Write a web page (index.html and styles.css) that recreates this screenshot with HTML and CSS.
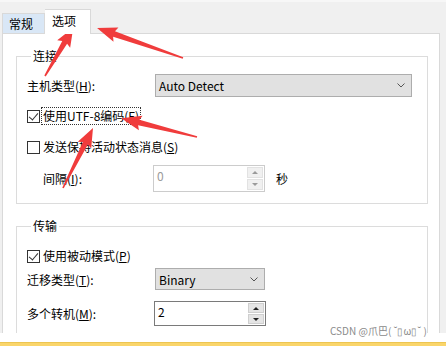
FILE: index.html
```html
<!DOCTYPE html>
<html lang="zh-CN">
<head>
    <meta charset="UTF-8">
    <title>选项</title>
    <link rel="stylesheet" href="styles.css">
</head>
<body>

    <div class="window">
        <div class="tabs">
            <div class="tab">常规</div>
            <div class="tab active">选项</div>
        </div>

        <div class="panel">
            <fieldset class="group">
                <legend>连接</legend>

                <div class="row first">
                    <span class="label">主机类型(<u>H</u>):</span>
                    <div class="select wide">
                        <span>Auto Detect</span>
                        <svg class="chev" width="8" height="5" viewBox="0 0 8 5"><polyline points="0.5,0.5 4,4 7.5,0.5" fill="none" stroke="#555" stroke-width="1"/></svg>
                    </div>
                </div>

                <div class="row check-row r-utf">
                    <span class="box checked"></span>
                    <span class="check-text focus">使用UTF-8编码(<u>F</u>)</span>
                </div>

                <div class="row check-row r-keep">
                    <span class="box"></span>
                    <span class="check-text">发送保持活动状态消息(<u>S</u>)</span>
                </div>

                <div class="row r-interval">
                    <span class="label indent">间隔(<u>I</u>):</span>
                    <div class="spin disabled">
                        <span class="spin-value">0</span>
                        <div class="spin-btns">
                            <span class="spin-btn"><i class="up"></i></span>
                            <span class="spin-btn"><i class="down"></i></span>
                        </div>
                    </div>
                    <span class="unit">秒</span>
                </div>
            </fieldset>

            <fieldset class="group second">
                <legend>传输</legend>

                <div class="row check-row r-passive">
                    <span class="box checked"></span>
                    <span class="check-text">使用被动模式(<u>P</u>)</span>
                </div>

                <div class="row r-type">
                    <span class="label">迁移类型(<u>T</u>):</span>
                    <div class="select narrow">
                        <span>Binary</span>
                        <svg class="chev" width="8" height="5" viewBox="0 0 8 5"><polyline points="0.5,0.5 4,4 7.5,0.5" fill="none" stroke="#555" stroke-width="1"/></svg>
                    </div>
                </div>

                <div class="row r-multi">
                    <span class="label">多个转机(<u>M</u>):</span>
                    <div class="spin">
                        <span class="spin-value">2</span>
                        <div class="spin-btns">
                            <span class="spin-btn"><i class="up"></i></span>
                            <span class="spin-btn"><i class="down"></i></span>
                        </div>
                    </div>
                </div>
            </fieldset>
        </div>

        <div class="side"></div>
    </div>

    <div class="gap"></div>
    <div class="notice"></div>

    <div class="watermark">CSDN @爪巴( ˘▯ω▯˘ )</div>

    <!-- red annotation arrows drawn over the dialog -->
    <svg class="arrows" width="446" height="346" viewBox="0 0 446 346">
        <g fill="#f03c3c">
            <polygon transform="translate(45,76) rotate(-59.7)" points="0,-0.8 39,-2.8 37,-7.5 56,0 37,7.5 39,2.8 0,0.8"/>
            <polygon transform="translate(183,58) rotate(-160.8)" points="0,-0.8 73,-2.8 71,-7.5 91,0 71,7.5 73,2.8 0,0.8"/>
            <polygon transform="translate(197,137) rotate(-166)" points="0,-0.8 60,-2.8 58,-7.5 78,0 58,7.5 60,2.8 0,0.8"/>
            <polygon transform="translate(63,188) rotate(-63.4)" points="0,-0.8 50,-2.8 48,-7.5 67,0 48,7.5 50,2.8 0,0.8"/>
        </g>
    </svg>

</body>
</html>
```

FILE: styles.css
```css
body {
    margin: 0;
    width: 446px;
    height: 346px;
    overflow: hidden;
    position: relative;
    background-color: #ffffff;
    font-family: "Noto Sans CJK SC", "Noto Sans", sans-serif;
    font-size: 12px;
    color: #000;
}

u {
    text-decoration: underline;
    text-underline-offset: 1px;
}

.window {
    height: 333px;
    background-color: #f0f0f0;
    border-top: 2px solid #f7f7f7;
    box-sizing: border-box;
    overflow: hidden;
    display: flex;
    flex-direction: column;
    position: relative;
}

.tabs {
    height: 31px;
    display: flex;
    align-items: flex-end;
    padding-left: 2px;
    flex-shrink: 0;
}

.tab {
    width: 43px;
    height: 20px;
    box-sizing: border-box;
    border: 1px solid #d9d9d9;
    border-bottom: none;
    background-color: #d9e7f6;
    line-height: 19px;
    padding-left: 6px;
}

.tab.active {
    width: 46px;
    height: 25px;
    margin-bottom: -1px;
    background-color: #fff;
    border-left: none;
    line-height: 22px;
    padding-left: 7px;
    position: relative;
    z-index: 1;
}

.panel {
    margin-left: 2px;
    width: 438px;
    flex: 1;
    box-sizing: border-box;
    background-color: #fff;
    border: 1px solid #d9d9d9;
    border-bottom: none;
    padding-top: 14px;
}

.side {
    position: absolute;
    right: 0;
    top: 31px;
    width: 6px;
    height: 296px;
    background-color: #f0f0f0;
}

.group {
    margin: 0 0 0 13px;
    width: 412px;
    box-sizing: border-box;
    border: 1px solid #dcdcdc;
    padding: 0 0 11px 10px;
}

.group legend {
    padding: 0 2px;
    margin-left: 4px;
    line-height: 16px;
    height: 16px;
}

.group.second {
    margin-top: 14px;
    padding-bottom: 30px;
}

.row {
    display: flex;
    align-items: center;
}

.row.first {
    margin-top: 10px;
    height: 23px;
}

.label {
    width: 128px;
    flex-shrink: 0;
}

.label.indent {
    width: 111px;
    margin-left: 16px;
}

.select {
    height: 23px;
    box-sizing: border-box;
    background-color: #e1e1e1;
    border: 1px solid #adadad;
    display: flex;
    align-items: center;
    justify-content: space-between;
    padding: 0 6px 0 3px;
}

.select.wide {
    width: 257px;
}

.select.narrow {
    width: 110px;
    height: 22px;
}

.chev {
    display: block;
}

.check-row {
    height: 18px;
}

.r-utf {
    margin-top: 10px;
}

.r-keep {
    margin-top: 13px;
}

.box {
    width: 13px;
    height: 13px;
    box-sizing: border-box;
    border: 1px solid #333;
    background-color: #fff;
    flex-shrink: 0;
    position: relative;
}

.box.checked::after {
    content: "";
    position: absolute;
    left: 3px;
    top: 0px;
    width: 4px;
    height: 8px;
    border-right: 1px solid #333;
    border-bottom: 1px solid #333;
    transform: rotate(40deg);
}

.check-text {
    margin-left: 1px;
    padding: 0 1px;
    line-height: 16px;
    border: 1px dotted transparent;
}

.check-text.focus {
    border-color: #333;
}

.r-interval {
    margin-top: 9px;
}

.spin {
    width: 112px;
    height: 27px;
    margin-left: -1px;
    box-sizing: border-box;
    border: 1px solid #7a7a7a;
    background-color: #fff;
    display: flex;
    justify-content: space-between;
}

.spin.disabled {
    border-color: #cccccc;
    color: #9a9a9a;
}

.spin-value {
    padding: 2px 0 0 3px;
    line-height: 16px;
}

.spin-btns {
    width: 16px;
    display: flex;
    flex-direction: column;
    gap: 1px;
    padding: 1px 1px 1px 0;
}

.spin-btn {
    flex: 1;
    background-color: #e5e5e5;
    border: 1px solid #cfcfcf;
    display: flex;
    align-items: center;
    justify-content: center;
}

.spin.disabled .spin-btn {
    background-color: #f0f0f0;
    border-color: #e2e2e2;
}

.spin-btn i {
    width: 0;
    height: 0;
    border-left: 3px solid transparent;
    border-right: 3px solid transparent;
}

.spin-btn i.up {
    border-bottom: 3px solid #222;
}

.spin-btn i.down {
    border-top: 3px solid #222;
}

.spin.disabled .spin-btn i.up {
    border-bottom-color: #9a9a9a;
}

.spin.disabled .spin-btn i.down {
    border-top-color: #9a9a9a;
}

.unit {
    margin-left: 11px;
}

.r-passive {
    margin-top: 13px;
}

.r-type {
    margin-top: 3px;
}

.r-multi {
    margin-top: 11px;
}

.r-multi .spin {
    height: 25px;
}

.gap {
    height: 9px;
}

.notice {
    height: 4px;
    background-color: #fad56a;
    border-top: 1px solid #ecc552;
}

.watermark {
    position: absolute;
    left: 330px;
    top: 323px;
    font-size: 10px;
    color: #8a8a8a;
    white-space: nowrap;
}

.arrows {
    position: absolute;
    left: 0;
    top: 0;
    pointer-events: none;
}
```
